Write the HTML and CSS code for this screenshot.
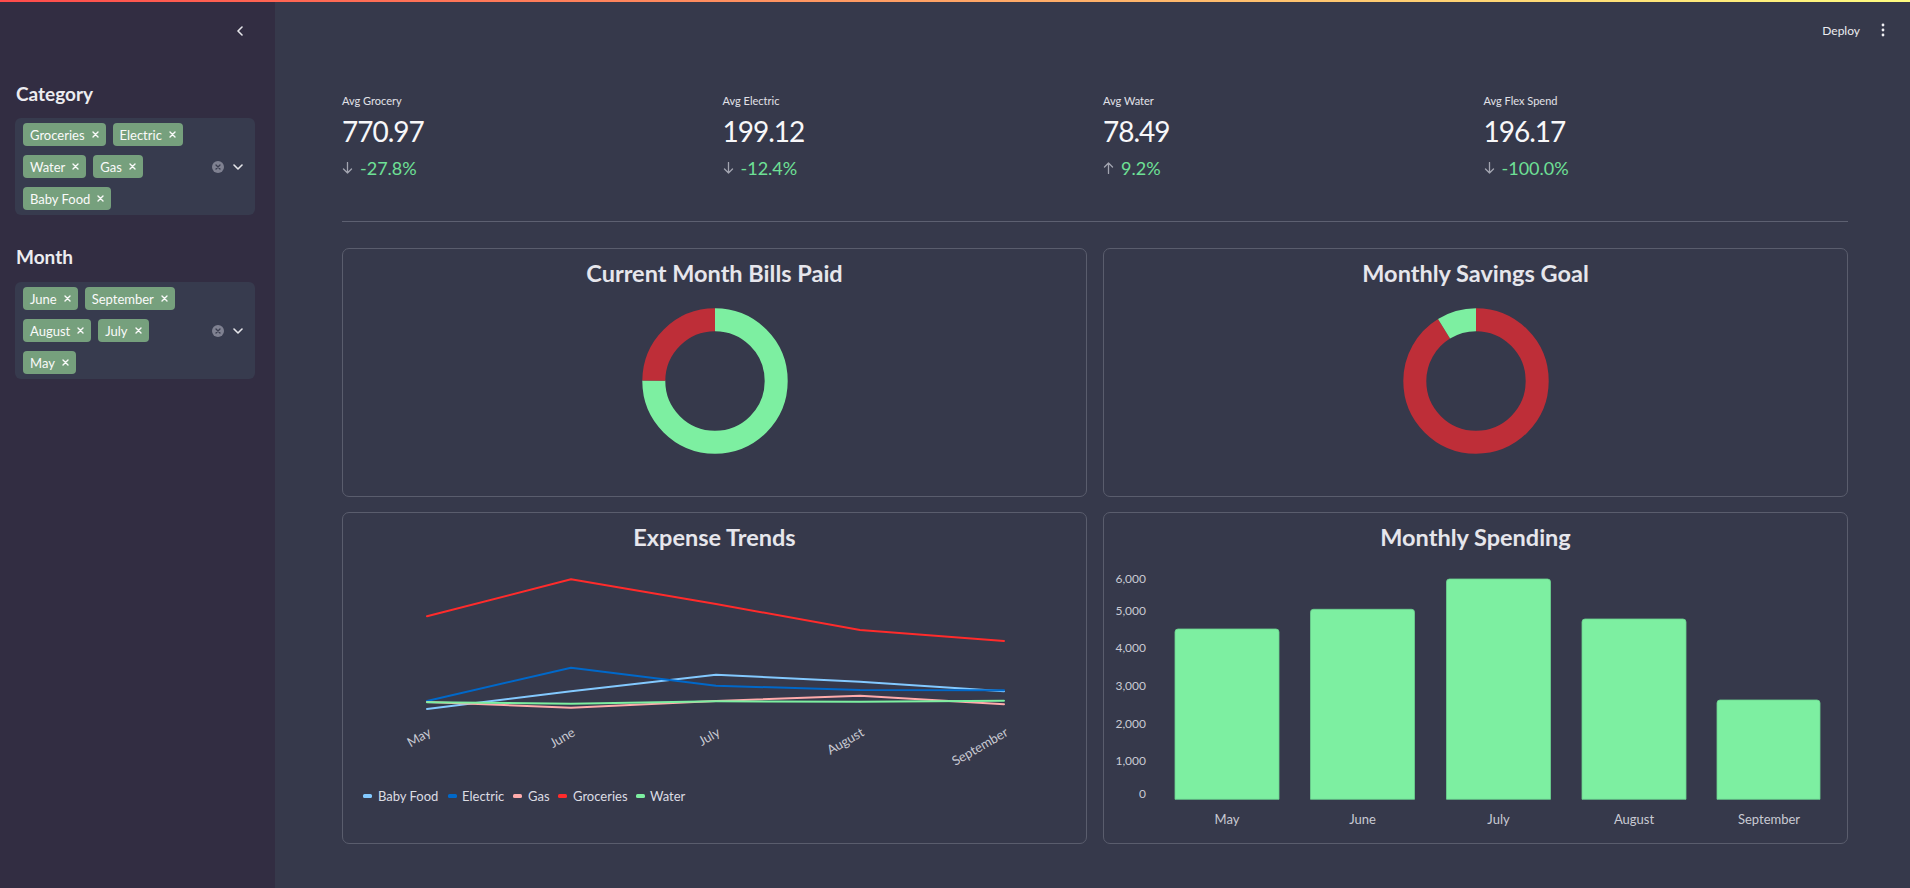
FILE: index.html
```html
<!DOCTYPE html>
<html lang="en">
<head>
<meta charset="utf-8">
<title>Expense Dashboard</title>
<link rel="stylesheet" href="styles.css">
</head>
<body>
<div class="decoration"></div>
<div class="app">
  <aside class="sidebar">
    <div class="sidebar-top">
      <svg class="collapse" width="8" height="10" viewBox="0 0 8 10"><path d="M6 1 L2 5 L6 9" fill="none" stroke="#e6e6ea" stroke-width="1.6" stroke-linecap="round" stroke-linejoin="round"/></svg>
    </div>

    <h3 class="filter-title">Category</h3>
    <div class="multiselect">
      <div class="tags">
        <span class="tag">Groceries<svg width="7" height="7" viewBox="0 0 7 7"><path d="M1 1L6 6M6 1L1 6" stroke="#fafafa" stroke-width="1.4" stroke-linecap="round"/></svg></span>
        <span class="tag">Electric<svg width="7" height="7" viewBox="0 0 7 7"><path d="M1 1L6 6M6 1L1 6" stroke="#fafafa" stroke-width="1.4" stroke-linecap="round"/></svg></span>
        <span class="tag">Water<svg width="7" height="7" viewBox="0 0 7 7"><path d="M1 1L6 6M6 1L1 6" stroke="#fafafa" stroke-width="1.4" stroke-linecap="round"/></svg></span>
        <span class="tag">Gas<svg width="7" height="7" viewBox="0 0 7 7"><path d="M1 1L6 6M6 1L1 6" stroke="#fafafa" stroke-width="1.4" stroke-linecap="round"/></svg></span>
        <span class="tag">Baby Food<svg width="7" height="7" viewBox="0 0 7 7"><path d="M1 1L6 6M6 1L1 6" stroke="#fafafa" stroke-width="1.4" stroke-linecap="round"/></svg></span>
      </div>
      <div class="indicators">
        <svg width="12" height="12" viewBox="0 0 12 12"><circle cx="6" cy="6" r="6" fill="#7f8191"/><path d="M4 4L8 8M8 4L4 8" stroke="#3a3d4f" stroke-width="1.3" stroke-linecap="round"/></svg>
        <svg width="10" height="6" viewBox="0 0 10 6"><path d="M1 1L5 5L9 1" fill="none" stroke="#e6e6ea" stroke-width="1.6" stroke-linecap="round" stroke-linejoin="round"/></svg>
      </div>
    </div>

    <h3 class="filter-title month">Month</h3>
    <div class="multiselect">
      <div class="tags">
        <span class="tag">June<svg width="7" height="7" viewBox="0 0 7 7"><path d="M1 1L6 6M6 1L1 6" stroke="#fafafa" stroke-width="1.4" stroke-linecap="round"/></svg></span>
        <span class="tag">September<svg width="7" height="7" viewBox="0 0 7 7"><path d="M1 1L6 6M6 1L1 6" stroke="#fafafa" stroke-width="1.4" stroke-linecap="round"/></svg></span>
        <span class="tag">August<svg width="7" height="7" viewBox="0 0 7 7"><path d="M1 1L6 6M6 1L1 6" stroke="#fafafa" stroke-width="1.4" stroke-linecap="round"/></svg></span>
        <span class="tag">July<svg width="7" height="7" viewBox="0 0 7 7"><path d="M1 1L6 6M6 1L1 6" stroke="#fafafa" stroke-width="1.4" stroke-linecap="round"/></svg></span>
        <span class="tag">May<svg width="7" height="7" viewBox="0 0 7 7"><path d="M1 1L6 6M6 1L1 6" stroke="#fafafa" stroke-width="1.4" stroke-linecap="round"/></svg></span>
      </div>
      <div class="indicators">
        <svg width="12" height="12" viewBox="0 0 12 12"><circle cx="6" cy="6" r="6" fill="#7f8191"/><path d="M4 4L8 8M8 4L4 8" stroke="#3a3d4f" stroke-width="1.3" stroke-linecap="round"/></svg>
        <svg width="10" height="6" viewBox="0 0 10 6"><path d="M1 1L5 5L9 1" fill="none" stroke="#e6e6ea" stroke-width="1.6" stroke-linecap="round" stroke-linejoin="round"/></svg>
      </div>
    </div>
  </aside>

  <main class="main">
    <header class="toolbar">
      <span class="deploy">Deploy</span>
      <svg class="kebab" width="4" height="14" viewBox="0 0 4 14"><circle cx="2" cy="2" r="1.4" fill="#f0f0f4"/><circle cx="2" cy="7" r="1.4" fill="#f0f0f4"/><circle cx="2" cy="12" r="1.4" fill="#f0f0f4"/></svg>
    </header>

    <div class="content">
      <section class="metrics">
        <div class="metric">
          <div class="metric-label">Avg Grocery</div>
          <div class="metric-value">770.97</div>
          <div class="metric-delta"><svg width="11" height="12" viewBox="0 0 11 12"><path d="M5.5 0.5V11M1.5 7L5.5 11L9.5 7" fill="none" stroke="#a2a4b0" stroke-width="1.3" stroke-linecap="round" stroke-linejoin="round"/></svg><span>-27.8%</span></div>
        </div>
        <div class="metric">
          <div class="metric-label">Avg Electric</div>
          <div class="metric-value">199.12</div>
          <div class="metric-delta"><svg width="11" height="12" viewBox="0 0 11 12"><path d="M5.5 0.5V11M1.5 7L5.5 11L9.5 7" fill="none" stroke="#a2a4b0" stroke-width="1.3" stroke-linecap="round" stroke-linejoin="round"/></svg><span>-12.4%</span></div>
        </div>
        <div class="metric">
          <div class="metric-label">Avg Water</div>
          <div class="metric-value">78.49</div>
          <div class="metric-delta"><svg width="11" height="12" viewBox="0 0 11 12"><path d="M5.5 11.5V1M1.5 5L5.5 1L9.5 5" fill="none" stroke="#a2a4b0" stroke-width="1.3" stroke-linecap="round" stroke-linejoin="round"/></svg><span>9.2%</span></div>
        </div>
        <div class="metric">
          <div class="metric-label">Avg Flex Spend</div>
          <div class="metric-value">196.17</div>
          <div class="metric-delta"><svg width="11" height="12" viewBox="0 0 11 12"><path d="M5.5 0.5V11M1.5 7L5.5 11L9.5 7" fill="none" stroke="#a2a4b0" stroke-width="1.3" stroke-linecap="round" stroke-linejoin="round"/></svg><span>-100.0%</span></div>
        </div>
      </section>

      <hr class="divider">

      <section class="charts">
        <div class="card">
          <div class="card-title">Current Month Bills Paid</div>
          <svg class="donut" width="186" height="186" viewBox="-93 -93 186 186">
            <g transform="rotate(-90)">
              <circle r="61.2" fill="none" stroke="#7defa1" stroke-width="23" stroke-dasharray="288.4 384.53"/>
              <circle r="61.2" fill="none" stroke="#be2e38" stroke-width="23" stroke-dasharray="96.13 384.53" stroke-dashoffset="-288.4"/>
            </g>
          </svg>
        </div>

        <div class="card">
          <div class="card-title">Monthly Savings Goal</div>
          <svg class="donut" width="186" height="186" viewBox="-93 -93 186 186">
            <g transform="rotate(-90)">
              <circle r="61.2" fill="none" stroke="#be2e38" stroke-width="23" stroke-dasharray="350.3 384.53"/>
              <circle r="61.2" fill="none" stroke="#7defa1" stroke-width="23" stroke-dasharray="34.23 384.53" stroke-dashoffset="-350.3"/>
            </g>
          </svg>
        </div>

        <div class="card">
          <div class="card-title">Expense Trends</div>
          <svg class="plot" width="743" height="291" viewBox="0 0 743 291">
            <g fill="none" stroke-width="2" stroke-linejoin="round" stroke-linecap="round">
              <polyline stroke="#83c9ff" points="84,157 228,139.3 373,122.7 517,129.7 661,139.3"/>
              <polyline stroke="#0068c9" points="84,149 228,115.7 373,133.7 517,138 661,138.3"/>
              <polyline stroke="#ffabab" points="84,150 228,155.7 373,149 517,143.7 661,152.3"/>
              <polyline stroke="#ff2b2b" points="84,64.3 228,27.3 373,52 517,78 661,89"/>
              <polyline stroke="#7defa1" points="84,150.3 228,151.7 373,149.3 517,149.7 661,148.7"/>
            </g>
            <g class="tick rot" text-anchor="end">
              <text x="89" y="183" transform="rotate(-30 89 183)">May</text>
              <text x="233" y="183" transform="rotate(-30 233 183)">June</text>
              <text x="378" y="183" transform="rotate(-30 378 183)">July</text>
              <text x="522" y="183" transform="rotate(-30 522 183)">August</text>
              <text x="666" y="183" transform="rotate(-30 666 183)">September</text>
            </g>
            <g class="legend">
              <rect x="20" y="242" width="9" height="4" rx="1.5" fill="#83c9ff"/><text x="35" y="248.5">Baby Food</text>
              <rect x="105" y="242" width="9" height="4" rx="1.5" fill="#0068c9"/><text x="119" y="248.5">Electric</text>
              <rect x="170" y="242" width="9" height="4" rx="1.5" fill="#ffabab"/><text x="185" y="248.5">Gas</text>
              <rect x="215" y="242" width="9" height="4" rx="1.5" fill="#ff2b2b"/><text x="230" y="248.5">Groceries</text>
              <rect x="293" y="242" width="9" height="4" rx="1.5" fill="#7defa1"/><text x="307" y="248.5">Water</text>
            </g>
          </svg>
        </div>

        <div class="card">
          <div class="card-title">Monthly Spending</div>
          <svg class="plot" width="743" height="291" viewBox="0 0 743 291">
            <g class="tick" text-anchor="end">
              <text x="42" y="31">6,000</text>
              <text x="42" y="63">5,000</text>
              <text x="42" y="100">4,000</text>
              <text x="42" y="138">3,000</text>
              <text x="42" y="176.3">2,000</text>
              <text x="42" y="213.3">1,000</text>
              <text x="42" y="245.6">0</text>
            </g>
            <g fill="#7defa1" stroke="#6cd491" stroke-width="0.8">
              <path d="M71 247.3V80Q71 77 74 77H172Q175 77 175 80V247.3Z"/>
              <path d="M206.5 247.3V60.3Q206.5 57.3 209.5 57.3H307.5Q310.5 57.3 310.5 60.3V247.3Z"/>
              <path d="M342.5 247.3V30Q342.5 27 345.5 27H443.5Q446.5 27 446.5 30V247.3Z"/>
              <path d="M478 247.3V70Q478 67 481 67H579Q582 67 582 70V247.3Z"/>
              <path d="M613 247.3V151Q613 148 616 148H713Q716 148 716 151V247.3Z"/>
            </g>
            <g class="tick xlab" text-anchor="middle">
              <text x="123" y="271.5">May</text>
              <text x="258.5" y="271.5">June</text>
              <text x="394.5" y="271.5">July</text>
              <text x="530" y="271.5">August</text>
              <text x="665" y="271.5">September</text>
            </g>
          </svg>
        </div>
      </section>
    </div>
  </main>
</div>
</body>
</html>
```

FILE: styles.css
```css
* {
  box-sizing: border-box;
  margin: 0;
  padding: 0;
}

html,
body {
  width: 1910px;
  height: 888px;
  overflow: hidden;
}

body {
  font-family: Lato, "Noto Sans", sans-serif;
  color: #fafafa;
  background: #36394b;
}

.decoration {
  position: fixed;
  top: 0;
  left: 0;
  right: 0;
  height: 2px;
  background: linear-gradient(90deg, #ff4b4b, #fffd80);
  z-index: 10;
}

.app {
  display: flex;
  height: 888px;
}

/* ---------- sidebar ---------- */
.sidebar {
  flex: 0 0 275px;
  width: 275px;
  background: #322d42;
  padding: 0 20px 0 15px;
}

.sidebar-top {
  height: 62px;
  display: flex;
  justify-content: flex-end;
  align-items: center;
  padding-right: 11px;
}

.collapse {
  display: block;
}

.filter-title {
  font-size: 19px;
  font-weight: 700;
  line-height: 28px;
  color: #ececf0;
  margin: 18px 0 10px 1px;
}

.filter-title.month {
  margin-top: 28px;
  margin-bottom: 11px;
}

.multiselect {
  background: #373b4e;
  border-radius: 6px;
  padding: 5px 12px 5px 8px;
  display: flex;
  align-items: center;
}

.tags {
  width: 172px;
  display: flex;
  flex-wrap: wrap;
  gap: 9px 7px;
}

.tag {
  display: inline-flex;
  align-items: center;
  gap: 7px;
  height: 23px;
  padding: 0 7px;
  background: #76a07d;
  border-radius: 4px;
  font-size: 13px;
  color: #fafafa;
  white-space: nowrap;
}

.tag svg {
  display: block;
}

.indicators {
  margin-left: auto;
  display: flex;
  align-items: center;
  gap: 9px;
}

.indicators svg {
  display: block;
}

/* ---------- main ---------- */
.main {
  flex: 1;
  display: flex;
  flex-direction: column;
}

.toolbar {
  height: 60px;
  display: flex;
  justify-content: flex-end;
  align-items: center;
  gap: 21px;
  padding-right: 25px;
}

.deploy {
  font-size: 12px;
  color: #ececf0;
}

.kebab {
  display: block;
}

.content {
  padding: 33px 62px 0 67px;
}

.metrics {
  display: grid;
  grid-template-columns: repeat(4, 1fr);
  gap: 16px;
}

.metric-label {
  font-size: 11px;
  line-height: 16px;
  color: #e2e2e8;
}

.metric-value {
  font-size: 28px;
  line-height: 36px;
  margin-top: 4px;
  letter-spacing: -1px;
  color: #f7f7f9;
}

.metric-delta {
  display: flex;
  align-items: center;
  gap: 7px;
  margin-top: 7px;
  font-size: 18px;
  line-height: 24px;
  color: #6ee096;
}

.metric-delta svg {
  display: block;
}

.divider {
  border: 0;
  height: 1px;
  background: #5d6071;
  margin-top: 41px;
}

.charts {
  margin-top: 26px;
  display: grid;
  grid-template-columns: 1fr 1fr;
  grid-template-rows: 249px 332px;
  gap: 15px 16px;
}

.card {
  border: 1px solid #5a5d6d;
  border-radius: 7px;
  padding-top: 9px;
  overflow: hidden;
}

.card-title {
  text-align: center;
  font-size: 23.5px;
  font-weight: 700;
  line-height: 30px;
  color: #e6e6ec;
}

.card svg {
  display: block;
  margin: 0 auto;
}

.tick text {
  font-family: Lato, "Noto Sans", sans-serif;
  font-size: 12px;
  fill: #c9cad3;
}

.rot text {
  font-size: 13px;
}

.xlab text {
  font-size: 13px;
}

.legend text {
  font-family: Lato, "Noto Sans", sans-serif;
  font-size: 13px;
  fill: #dcdce3;
}
```
